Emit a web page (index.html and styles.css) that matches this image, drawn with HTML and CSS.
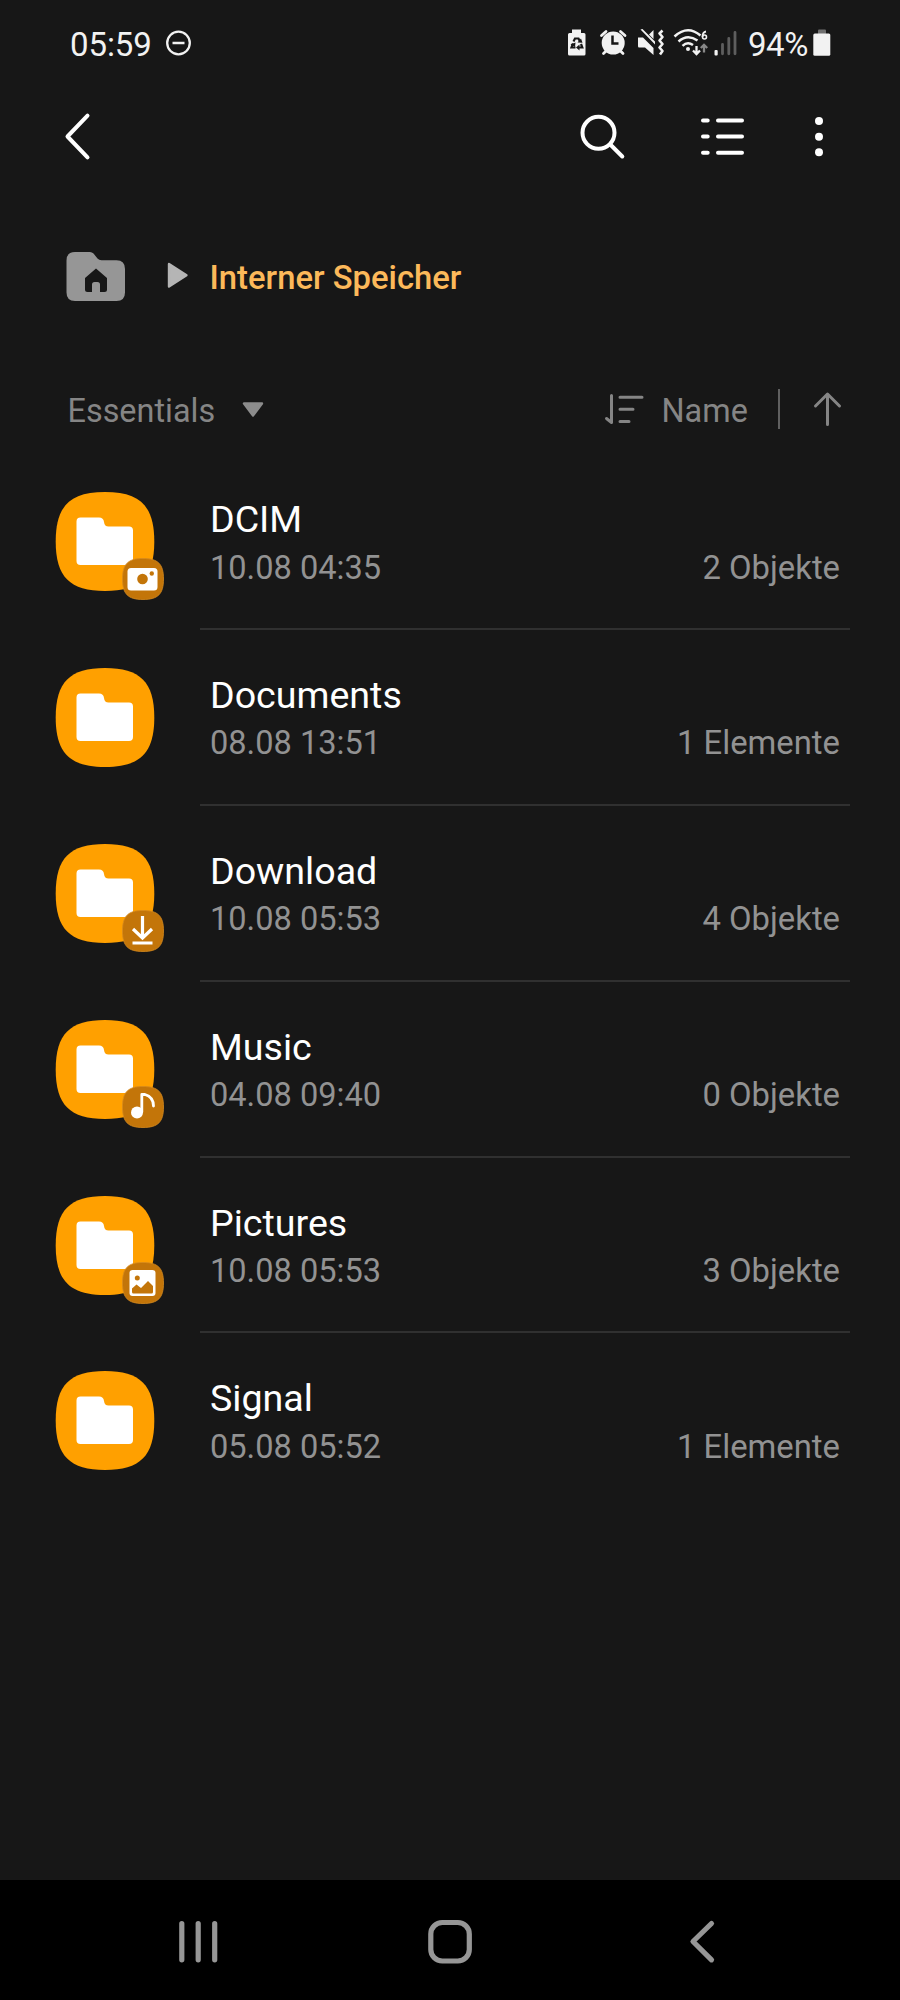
FILE: index.html
```html
<!DOCTYPE html>
<html lang="de">
<head>
<meta charset="utf-8">
<title>Interner Speicher</title>
<link rel="stylesheet" href="styles.css">
</head>
<body>
<svg class="defs" width="0" height="0" aria-hidden="true">
  <symbol id="folder" viewBox="0 0 116 116">
    <path fill="#ffa000" d="M55 2C90 2 104.300 16 104.300 51.500C104.300 87 90 101 55 101C20 101 5.700 87 5.700 51.500C5.700 16 20 2 55 2Z"/>
    <path fill="#fff" d="M30.500 27.500H49Q53.500 27.500 54 32Q54.500 36.500 58.500 36.500H79Q83 36.500 83 40.500V71Q83 75 79 75H30.500Q26.500 75 26.500 71V31.500Q26.500 27.500 30.500 27.500Z"/>
  </symbol>
  <symbol id="badge" viewBox="0 0 42 42">
    <path fill="#c37509" stroke="#d58a20" stroke-width=".8" d="M21 .5C36 .5 41.500 6 41.500 21C41.500 36 36 41.500 21 41.500C6 41.500 .5 36 .5 21C.5 6 6 .5 21 .5Z"/>
  </symbol>
</svg>
<div class="screen">
  <header class="status">
    <span class="clock">05:59</span>
    <svg class="dnd" width="26" height="26" viewBox="0 0 26 26" fill="none" stroke="#f2f2f2"><circle cx="12.500" cy="13" r="11.300" stroke-width="2.300"/><path d="M6.500 13H18.500" stroke-width="2.500"/></svg>
    <div class="indicators">
      <svg width="270" height="36" viewBox="560 26 270 36">
        <g fill="#f2f2f2">
          <path d="M572 29.500H581V33H584Q585.500 33 585.500 34.500V54Q585.500 55.500 584 55.500H569.500Q568 55.500 568 54V34.500Q568 33 569.500 33H572Z"/>
          <path fill="none" stroke="#171717" stroke-width="2.200" d="M573.500 41.500L575 38.500H578.500L580 41.500M581 44L582.300 47.500H578M575.500 47.500H571.500L573 43.500"/>
          <path fill="#171717" d="M577.500 42.500L582.500 42.800L581 38.500ZM579.500 44.500L576 47.500L579.500 50.500ZM570.500 44.500L575.500 42.500L575 47Z"/>
          <circle cx="613.200" cy="43" r="11.500"/>
          <path fill="none" stroke="#f2f2f2" stroke-width="2.800" stroke-linecap="round" d="M601.500 35.500L606 31.500M620.500 31.500L625 35.500M606 51L603.500 53.500M620.500 51L623 53.500"/>
          <path fill="none" stroke="#171717" stroke-width="2.500" d="M612.500 35.500V43.500H618.500"/>
          <path d="M638 37.500H643L653.500 48V55L645 47.500H639Q638 47.500 638 46ZM649 34.500L653.500 30V39ZM640.500 29.500L655 44.500V41.500L642.500 29Z"/>
          <path fill="none" stroke="#f2f2f2" stroke-width="2.600" stroke-linejoin="round" d="M662.500 30.500L659.500 33.500L662.500 37L659.500 40.500L662.500 44L659.500 47.500L662.500 51L660 54.500"/>
          <path fill="none" stroke="#f2f2f2" stroke-width="2.500" d="M674.500 36.500Q687.500 24.500 700.500 35.500M678.500 41.500Q687.500 33.500 697.500 40.500M682.500 45.800Q687.500 41 693 45"/>
          <circle cx="688" cy="49" r="2"/>
          <path fill="none" stroke="#f2f2f2" stroke-width="1.800" d="M706 31.500Q702.500 32 702.500 37"/>
          <circle cx="704.500" cy="37" r="2" fill="none" stroke="#f2f2f2" stroke-width="1.600"/>
          <path fill="none" stroke="#f2f2f2" stroke-width="2.300" d="M696.500 46V54M693 50.500L696.500 54L700 50.500"/>
          <path fill="none" stroke="#888" stroke-width="2.300" d="M704 52.500V45M700.800 48L704 44.800L707.200 48"/>
          <rect x="714.500" y="50" width="3.200" height="5.500" rx="1"/>
        </g>
        <path fill="none" stroke="#5e5e5e" stroke-width="2.800" stroke-linecap="round" d="M722.500 44.500V53.800M728.800 38.500V53.800M735 32.500V53.800"/>
        <rect x="818" y="29.500" width="8" height="5" rx="1" fill="#707070"/>
        <rect x="813.300" y="33.500" width="17" height="22.200" rx="1.500" fill="#f2f2f2"/>
      </svg>
      <span class="percent">94%</span>
    </div>
  </header>

  <nav class="toolbar">
    <svg width="32" height="54" viewBox="60 110 32 54"><path class="line-white" d="M87.500 115.700L67.500 136.500L87.500 157.300"/></svg>
    <div class="actions">
      <svg width="50" height="50" viewBox="577 112 50 50"><circle class="line-white" cx="598.500" cy="132.800" r="16"/><path class="line-white" d="M610.800 145L622.300 156.500"/></svg>
      <svg width="50" height="50" viewBox="697 112 50 50"><path class="line-white" d="M703 120.500H707.700M718 120.500H742M703 136.500H707.700M718 136.500H742M703 152.700H707.700M718 152.700H742"/></svg>
      <svg width="12" height="50" viewBox="813 112 12 50" fill="#fff"><circle cx="819" cy="121" r="4"/><circle cx="819" cy="136.700" r="4"/><circle cx="819" cy="152.300" r="4"/></svg>
    </div>
  </nav>

  <div class="path">
    <svg width="60" height="50" viewBox="0 0 60 50"><path fill="#969696" d="M8 0H23Q25 0 26.500 1.500L30.500 6.500Q32 8.200 34.500 8.200H49.500Q58 8.200 58 17V40.500Q58 49 49.500 49H8Q-.5 49 -.5 40.500V8.500Q-.5 0 8 0Z"/><path fill="#171717" d="M29 16.500L40 26V37.500Q40 40 37.500 40H33V32.500Q33 30 30.500 30H27.500Q25 30 25 32.500V40H20.500Q18 40 18 37.500V26Z"/></svg>
    <svg class="play" width="22" height="27" viewBox="0 0 22 27"><path d="M2 2L19.500 13.200L2 24.500Z" fill="#b5b5b5" stroke="#b5b5b5" stroke-width="2.400" stroke-linejoin="round"/></svg>
    <span class="crumb">Interner Speicher</span>
  </div>

  <div class="sort">
    <span>Essentials</span>
    <svg class="caret" width="24" height="18" viewBox="0 0 24 18"><path d="M3 2.500H21L12 14.500Z" fill="#8c8c8c" stroke="#8c8c8c" stroke-width="2.400" stroke-linejoin="round"/></svg>
    <div class="order">
      <svg width="46" height="36" viewBox="602 391 46 36"><path class="line-gray" d="M606.500 418.500L611.500 422.500V395.500M620 397.200H642M620 409.300H633M620 421.500H629"/></svg>
      <span class="key">Name</span>
      <i class="rule"></i>
      <svg width="30" height="36" viewBox="812 391 30 36"><path class="line-gray" d="M827.500 424.500V394.500M815.500 406L827.500 394L839.500 406"/></svg>
    </div>
  </div>

  <main class="list">
    <article class="row">
      <svg class="icon" width="116" height="116"><use href="#folder" width="116" height="116"/><use href="#badge" x="72" y="68" width="42" height="42"/><rect x="77.500" y="78" width="30" height="22.500" rx="3.500" fill="#fff"/><circle cx="92.500" cy="89" r="5.300" fill="#c37509"/><circle cx="101.800" cy="83.500" r="2.200" fill="#c37509"/></svg>
      <div class="info"><h2>DCIM</h2><p><span>10.08 04:35</span><span class="count">2 Objekte</span></p></div>
    </article>
    <article class="row">
      <svg class="icon" width="116" height="116"><use href="#folder" width="116" height="116"/></svg>
      <div class="info"><h2>Documents</h2><p><span>08.08 13:51</span><span class="count">1 Elemente</span></p></div>
    </article>
    <article class="row">
      <svg class="icon" width="116" height="116"><use href="#folder" width="116" height="116"/><use href="#badge" x="72" y="68" width="42" height="42"/><path fill="none" stroke="#fff" stroke-width="3.200" d="M92.500 74V95M83 87L92.500 96L102 87M82.500 101H102.500"/></svg>
      <div class="info"><h2>Download</h2><p><span>10.08 05:53</span><span class="count">4 Objekte</span></p></div>
    </article>
    <article class="row">
      <svg class="icon" width="116" height="116"><use href="#folder" width="116" height="116"/><use href="#badge" x="72" y="68" width="42" height="42"/><circle cx="87" cy="94.500" r="6" fill="#fff"/><path fill="none" stroke="#fff" stroke-width="2.800" stroke-linecap="round" stroke-linejoin="round" d="M91.800 94V76.500H95Q103.500 79 103.500 88"/></svg>
      <div class="info"><h2>Music</h2><p><span>04.08 09:40</span><span class="count">0 Objekte</span></p></div>
    </article>
    <article class="row">
      <svg class="icon" width="116" height="116"><use href="#folder" width="116" height="116"/><use href="#badge" x="72" y="68" width="42" height="42"/><rect x="79.500" y="76" width="26" height="26" rx="3" fill="#fff"/><circle cx="87.300" cy="84" r="2.500" fill="#c37509"/><path fill="#c37509" d="M82 94.500L86.500 90.500L91 94L98 87L103 92V98Q103 99.500 101.500 99.500H83.500Q82 99.500 82 98Z"/></svg>
      <div class="info"><h2>Pictures</h2><p><span>10.08 05:53</span><span class="count">3 Objekte</span></p></div>
    </article>
    <article class="row">
      <svg class="icon" width="116" height="116"><use href="#folder" width="116" height="116"/></svg>
      <div class="info"><h2>Signal</h2><p><span>05.08 05:52</span><span class="count">1 Elemente</span></p></div>
    </article>
  </main>

  <footer class="navbar">
    <svg width="44" height="46" viewBox="177 1919 44 46"><path class="line-nav" d="M181.800 1923.500V1959.800M198.200 1923.500V1959.800M214.700 1923.500V1959.800"/></svg>
    <svg class="home" width="46" height="46" viewBox="427 1919 46 46"><rect class="line-nav" x="430.800" y="1922.500" width="38.500" height="38.500" rx="11.500"/></svg>
    <svg width="28" height="46" viewBox="688 1919 28 46"><path class="line-nav" d="M711.500 1923.500L693 1941.500L711.500 1959.800"/></svg>
  </footer>
</div>
</body>
</html>
```

FILE: styles.css
```css
* { box-sizing: border-box; margin: 0; padding: 0; }
body { background: #171717; font-family: Roboto, "Liberation Sans", sans-serif; color: #fff; }
svg { display: block; flex: none; overflow: visible; }
.defs { position: absolute; }
.screen { width: 900px; height: 2000px; display: flex; flex-direction: column; overflow: hidden; background: #171717; }

.status { height: 88px; padding: 25px 70px 0 70px; display: flex; align-items: flex-start; color: #f2f2f2; font-size: 33px; line-height: 40px; white-space: nowrap; }
.clock { width: 95.500px; letter-spacing: -.1px; }
.dnd { margin-top: 5px; }
.indicators { margin-left: auto; display: grid; }
.indicators > * { grid-area: 1 / 1; }
.indicators svg { margin-top: 1px; }
.percent { justify-self: end; margin-right: 22px; font-size: 33px; letter-spacing: -.4px; }

.toolbar { height: 112px; padding: 22px 75px 0 60px; display: flex; justify-content: space-between; align-items: flex-start; }
.actions { display: flex; padding-top: 2px; }
.actions svg:nth-child(2) { margin-left: 70px; }
.actions svg:nth-child(3) { margin-left: 66px; }
.line-white { fill: none; stroke: #fff; stroke-width: 4; stroke-linecap: round; stroke-linejoin: round; }

.path { height: 154px; padding: 52px 0 0 66.500px; display: flex; align-items: flex-start; }
.play { margin: 9.500px 0 0 40.500px; }
.crumb { margin: 6px 0 0 20.500px; font-size: 32.800px; font-weight: 500; line-height: 40px; color: #fcb95a; }

.sort { height: 100px; padding: 37px 58px 0 67.500px; display: flex; align-items: flex-start; color: #858585; font-size: 32.400px; line-height: 40px; }
.caret { margin: 9.500px 0 0 26px; }
.order { margin-left: auto; display: flex; align-items: flex-start; }
.key { margin-left: 13.500px; width: 116.500px; }
.rule { width: 1.500px; height: 40px; margin: -2px 32.500px 0 0; background: #606060; }
.line-gray { fill: none; stroke: #858585; stroke-width: 3; stroke-linecap: round; stroke-linejoin: round; }

.list { flex: 1; }
.row { height: 175.900px; padding: 0 50px; display: flex; }
.icon { margin-top: 36px; }
.info { margin-left: 34px; flex: 1; padding: 42px 10px 0 10px; border-bottom: 2px solid #303030; }
.row:last-child .info { border-bottom: 0; }
.info h2 { font-size: 37.600px; font-weight: 400; line-height: 46px; height: 48.500px; }
.info p { display: flex; justify-content: space-between; font-size: 32.600px; line-height: 46px; color: #929292; }
.info .count { font-size: 32.800px; }

.navbar { height: 120px; padding: 39px 184px 0 177px; background: #000; display: flex; align-items: flex-start; justify-content: space-between; }
.home { margin-right: 10px; }
.line-nav { fill: none; stroke: #969696; stroke-width: 5.200; stroke-linecap: round; stroke-linejoin: round; }
```
